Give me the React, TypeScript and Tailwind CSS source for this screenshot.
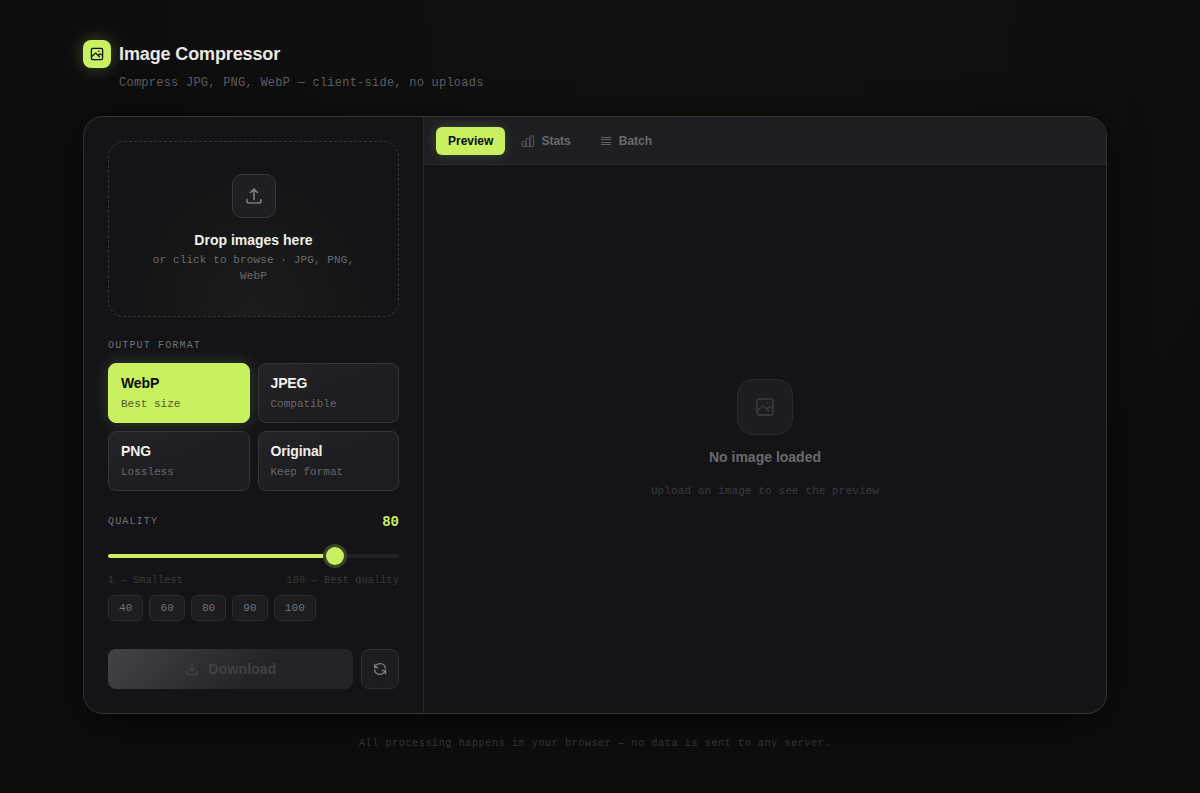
import React, { useState } from 'react';

type Format = { id: string; name: string; hint: string };

const FORMATS: Format[] = [
  { id: 'webp', name: 'WebP', hint: 'Best size' },
  { id: 'jpeg', name: 'JPEG', hint: 'Compatible' },
  { id: 'png', name: 'PNG', hint: 'Lossless' },
  { id: 'original', name: 'Original', hint: 'Keep format' },
];

const PRESETS = [40, 60, 80, 90, 100];

type IconProps = { className?: string };

const ImageIcon: React.FC<IconProps> = ({ className }) => (
  <svg viewBox="0 0 20 20" fill="none" stroke="currentColor" strokeWidth="1.8" strokeLinejoin="round" className={className}>
    <rect x="2" y="2" width="16" height="16" rx="2" />
    <path d="M2.5 13.8L7 9.4q1-.9 2 0L14.2 14.6M12 12l1.6-1.7q.9-.8 1.8 0L18 11.8" />
    <circle cx="12.5" cy="6.2" r="1.1" fill="currentColor" stroke="none" />
  </svg>
);

const UploadIcon: React.FC<IconProps> = ({ className }) => (
  <svg viewBox="0 0 20 20" fill="none" stroke="currentColor" strokeWidth="1.7" strokeLinecap="round" strokeLinejoin="round" className={className}>
    <path d="M10 13.5V3.3M6.6 6.5L10 3l3.4 3.5M3 13.5V15a2 2 0 0 0 2 2h10a2 2 0 0 0 2-2v-1.5" />
  </svg>
);

const DownloadIcon: React.FC<IconProps> = ({ className }) => (
  <svg viewBox="0 0 16 16" fill="none" stroke="currentColor" strokeWidth="1.6" strokeLinecap="round" strokeLinejoin="round" className={className}>
    <path d="M8 2.5v7.5M5.2 7.5L8 10.3l2.8-2.8M2.5 10.5v1.4a1.7 1.7 0 0 0 1.7 1.7h7.6a1.7 1.7 0 0 0 1.7-1.7v-1.4" />
  </svg>
);

const StatsIcon: React.FC<IconProps> = ({ className }) => (
  <svg viewBox="0 0 14 14" fill="none" stroke="currentColor" strokeWidth="1.2" className={className}>
    <rect x="1.3" y="7.5" width="3.4" height="5" rx="1" />
    <rect x="5.2" y="4.5" width="3.4" height="8" rx="1" />
    <rect x="9.1" y="1.8" width="3.4" height="10.7" rx="1" />
  </svg>
);

const ListIcon: React.FC<IconProps> = ({ className }) => (
  <svg viewBox="0 0 14 14" fill="none" stroke="currentColor" className={className}>
    <path d="M2 3.5h10M2 5.5h10M2 8.5h10M2 10.5h10" />
  </svg>
);

const RefreshIcon: React.FC<IconProps> = ({ className }) => (
  <svg viewBox="0 0 14 14" fill="none" stroke="currentColor" strokeWidth="1.4" strokeLinejoin="round" className={className}>
    <path d="M1.6 1.8v3.7h3.7M12.4 12.2V8.5H8.7" />
    <path d="M1.8 5.3C3 2.6 5 1.6 7.2 1.6c3 0 5.2 2.3 5.2 5.2M12.2 8.7C11 11.4 9 12.4 6.8 12.4c-3 0-5.2-2.3-5.2-5.2" />
  </svg>
);

const App: React.FC = () => {
  const [format, setFormat] = useState('webp');
  const [quality, setQuality] = useState(80);
  const [tab, setTab] = useState('Preview');

  const tabs = [
    { name: 'Preview', icon: null },
    { name: 'Stats', icon: <StatsIcon className="size-3.5 opacity-70" /> },
    { name: 'Batch', icon: <ListIcon className="size-3.5 opacity-90" /> },
  ];

  return (
    <div className="h-[793px] overflow-hidden bg-[#0d0d0e] bg-[radial-gradient(ellipse_at_60%_0%,rgba(200,240,96,0.018),transparent_60%)] pt-10 pr-[10px] font-['Liberation_Sans',sans-serif] text-[#f0efe8]">
      <div className="mx-auto w-[1024px]">
        <header>
          <div className="flex h-7 items-center gap-2">
            <div className="flex size-7 items-center justify-center rounded-lg bg-[#c8f060] text-[#0d0d0e] shadow-[0_0_16px_rgba(200,240,96,0.3)]">
              <ImageIcon className="size-3.5" />
            </div>
            <h1 className="text-[18px] leading-7 font-bold tracking-[-0.12px] text-[#e8e7e1]">Image Compressor</h1>
          </div>
          <p className="mt-[7px] ml-9 font-['Liberation_Mono',monospace] text-xs leading-4 tracking-[0.02em] text-[#5c5c62]">
            Compress JPG, PNG, WebP — client-side, no uploads
          </p>
        </header>

        {/* Main panel */}
        <main className="mt-[25px] flex h-[598px] overflow-hidden rounded-[20px] border border-[#333335] bg-[#141418] shadow-[0_8px_40px_rgba(0,0,0,0.6)]">
          <aside className="w-[340px] shrink-0 border-r border-[#28282c] p-6">
            <div className="flex h-44 flex-col items-center rounded-2xl border border-dashed border-[#343438] bg-[radial-gradient(ellipse_at_50%_100%,rgba(200,240,96,0.04),transparent_70%)] px-8 pt-8 text-center">
              <div className="flex size-11 items-center justify-center rounded-[10px] border border-[#38383d] bg-[#1e1e23] text-[#77777c]">
                <UploadIcon className="size-5" />
              </div>
              <div className="mt-3 text-sm leading-5 font-bold">Drop images here</div>
              <p className="mt-0.5 font-['Liberation_Mono',monospace] text-[11px] leading-4 tracking-[0.01em] text-[#6a6a6e]">
                or click to browse · JPG, PNG, WebP
              </p>
            </div>

            <div className="mt-[21px] font-['Liberation_Mono',monospace] text-[10px] leading-4 tracking-[0.115em] text-[#717177]">OUTPUT FORMAT</div>
            <div className="mt-[9px] grid grid-cols-2 gap-2">
              {FORMATS.map((f) => (
                <button
                  key={f.id}
                  onClick={() => setFormat(f.id)}
                  className={`h-[60px] rounded-lg border px-3 text-left ${
                    format === f.id
                      ? 'border-[#c8f060] bg-[#c8f060] text-[#0d0d0e] shadow-[0_0_16px_rgba(200,240,96,0.2)]'
                      : 'border-[#353539] bg-linear-to-br from-[#232328] to-[#1c1c21] to-60%'
                  }`}
                >
                  <div className="pb-0.5 text-sm leading-5 font-bold tracking-[-0.01em]">{f.name}</div>
                  <div className={`font-['Liberation_Mono',monospace] text-[11px] leading-[19px] ${format === f.id ? 'text-[#4c5929]' : 'text-[#67676d]'}`}>
                    {f.hint}
                  </div>
                </button>
              ))}
            </div>

            <div className="mt-5 flex h-5 items-center justify-between font-['Liberation_Mono',monospace]">
              <span className="text-[10px] tracking-[0.115em] text-[#717177]">QUALITY</span>
              <span className="pt-px text-sm font-bold text-[#c8f060]">{quality}</span>
            </div>
            <div className="relative mt-[23px] h-1 rounded-full bg-[#222226]">
              <div className="h-1 rounded-full bg-[#c8f060]" style={{ width: `${quality - 2}%` }} />
              <div
                className="absolute -top-[7px] size-[18px] rounded-full bg-[#c8f060] shadow-[0_0_0_3px_#3a4326]"
                style={{ left: `calc((100% - 18px) * ${(quality - 1) / 99})` }}
              />
              <input
                type="range"
                min={1}
                max={100}
                value={quality}
                onChange={(e) => setQuality(Number(e.target.value))}
                className="absolute -top-2 left-0 h-5 w-full cursor-pointer opacity-0"
              />
            </div>
            <div className="mt-[15px] flex justify-between font-['Liberation_Mono',monospace] text-[10px] leading-4 tracking-[0.025em] text-[#39393d]">
              <span>1 — Smallest</span>
              <span>100 — Best quality</span>
            </div>
            <div className="mt-1.5 flex gap-1.5">
              {PRESETS.map((p) => (
                <button
                  key={p}
                  onClick={() => setQuality(p)}
                  className="h-[26px] rounded-md border border-[#2c2c30] bg-[#1c1c21] px-2.5 font-['Liberation_Mono',monospace] text-[11px] tracking-[0.01em] text-[#717177]"
                >
                  {p}
                </button>
              ))}
            </div>

            <div className="mt-7 flex gap-2">
              <button
                disabled
                className="flex h-10 flex-1 items-center justify-center gap-2 rounded-lg bg-[linear-gradient(135deg,#434348_0%,#222428_60%)] text-sm font-bold tracking-[0.01em] text-[#404046]"
              >
                <DownloadIcon className="size-4" />
                Download
              </button>
              <button className="flex h-10 w-[38px] items-center justify-center rounded-lg border border-[#2e2e32] bg-[#1c1c21] text-[#7b7b80]">
                <RefreshIcon className="size-3.5" />
              </button>
            </div>
          </aside>

          <section className="flex flex-1 flex-col">
            <nav className="flex h-12 items-center gap-1 border-b border-[#2c2c30] bg-[#1e1e23] px-3">
              {tabs.map((t) => (
                <button
                  key={t.name}
                  onClick={() => setTab(t.name)}
                  className={`flex h-7 items-center gap-1.5 rounded-md px-3 text-xs font-bold ${
                    tab === t.name ? 'bg-[#c8f060] text-[#0d0d0e] shadow-[0_0_12px_rgba(200,240,96,0.2)]' : 'text-[#69696f]'
                  }`}
                >
                  {t.icon}
                  {t.name}
                </button>
              ))}
            </nav>

            {/* Empty state */}
            <div className="flex flex-1 flex-col items-center pt-[214px]">
              <div className="flex size-14 items-center justify-center rounded-2xl border border-[#2a2a2e] bg-[#1c1c21] text-[#36363a]">
                <ImageIcon className="size-5" />
              </div>
              <div className="mt-3 text-sm leading-5 font-bold text-[#69696f]">No image loaded</div>
              <p className="mt-4 font-['Liberation_Mono',monospace] text-[11px] leading-4 tracking-[0.01em] text-[#39393d]">
                Upload an image to see the preview
              </p>
            </div>
          </section>
        </main>

        <footer className="mt-[22px] text-center font-['Liberation_Mono',monospace] text-[10px] leading-4 tracking-[0.065em] text-[#343437]">
          All processing happens in your browser — no data is sent to any server.
        </footer>
      </div>
    </div>
  );
};

export default App;
